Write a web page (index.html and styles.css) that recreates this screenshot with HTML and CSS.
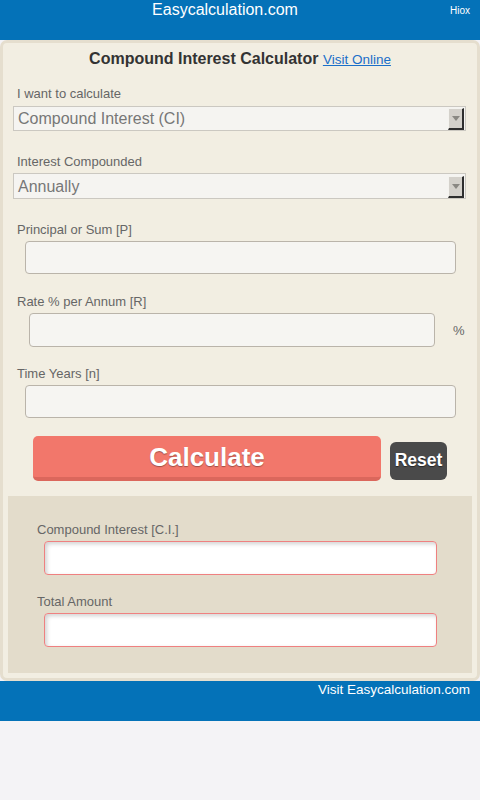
FILE: index.html
```html
<!DOCTYPE html>
<html>
<head>
<meta charset="utf-8">
<link rel="stylesheet" href="styles.css">
</head>
<body>
<header class="topbar">
  <div class="site">Easycalculation.com</div>
  <div class="hiox">Hiox</div>
</header>
<main class="panel">
  <h1 class="title">Compound Interest Calculator <a class="visit" href="#">Visit Online</a></h1>

  <div class="label first">I want to calculate</div>
  <div class="select">
    <span class="sel-text">Compound Interest (CI)</span>
    <span class="arrow"><svg width="8" height="5" viewBox="0 0 8 5"><path d="M0 0H8L4 5Z" fill="#8a8883"/></svg></span>
  </div>

  <div class="label">Interest Compounded</div>
  <div class="select sel2">
    <span class="sel-text">Annually</span>
    <span class="arrow"><svg width="8" height="5" viewBox="0 0 8 5"><path d="M0 0H8L4 5Z" fill="#8a8883"/></svg></span>
  </div>

  <div class="label">Principal or Sum [P]</div>
  <div class="input"></div>

  <div class="label l4">Rate % per Annum [R]</div>
  <div class="rate-row">
    <div class="input rate"></div>
    <span class="pct">%</span>
  </div>

  <div class="label l5">Time Years [n]</div>
  <div class="input"></div>

  <div class="buttons">
    <div class="calc">Calculate</div>
    <div class="reset">Reset</div>
  </div>

  <section class="result">
    <div class="rlabel">Compound Interest [C.I.]</div>
    <div class="output"></div>
    <div class="rlabel r2">Total Amount</div>
    <div class="output"></div>
  </section>
</main>
<footer class="bottombar">Visit Easycalculation.com</footer>
</body>
</html>
```

FILE: styles.css
```css
* { box-sizing: border-box; }
html, body { margin: 0; padding: 0; }
body {
  background: #f4f3f6;
  font-family: "Liberation Sans", Arial, sans-serif;
  width: 480px;
}
.topbar {
  background: #0472b8;
  height: 40px;
  display: grid;
  grid-template-columns: 1fr auto;
  padding-right: 10px;
  color: #fff;
}
.site {
  text-align: center;
  font-size: 16px;
  line-height: 18px;
  padding-top: 1px;
}
.hiox {
  font-size: 10px;
  line-height: 12px;
  padding-top: 5px;
}
.panel {
  background: #f2eee2;
  border: 3px solid #e5dece;
  border-radius: 7px;
  padding: 6px 0 5px;
  display: flex;
  flex-direction: column;
}
.title {
  margin: 0;
  text-align: center;
  font-size: 16px;
  line-height: 20px;
  font-weight: bold;
  color: #333;
}
.visit {
  font-size: 13.5px;
  font-weight: normal;
  color: #1a6fc9;
  text-decoration: underline;
}
.label {
  font-size: 13px;
  line-height: 16px;
  color: #666;
  padding-left: 14px;
  margin-top: 23px;
  margin-bottom: 3px;
}
.label.first { margin-top: 16px; margin-bottom: 4px; }
.label.l4 { margin-top: 20px; }
.label.l5 { margin-top: 19px; }
.select {
  margin: 0 11px 0 10px;
  height: 25px;
  border: 1px solid #cbc8c1;
  background: #f5f4f1;
  display: flex;
  align-items: center;
  padding: 1px 1px 0 4px;
}
.select.sel2 { height: 26px; }
.sel-text {
  flex: 1;
  font-size: 16px;
  color: #777;
}
.arrow {
  width: 16px;
  height: 22px;
  background: #d4d1cb;
  border-top: 1px solid #f4f3ef;
  border-left: 1px solid #f4f3ef;
  border-right: 2px solid #2e2e2e;
  border-bottom: 2px solid #2e2e2e;
  display: flex;
  align-items: center;
  justify-content: center;
}
.input {
  margin: 0 21px 0 22px;
  height: 33px;
  border: 1px solid #bab4aa;
  border-radius: 4px;
  background: #f6f5f2;
}
.rate-row {
  display: flex;
  align-items: center;
}
.input.rate {
  margin: 0;
  margin-left: 26px;
  width: 406px;
  height: 34px;
}
.pct {
  margin-left: 18px;
  margin-top: 0;
  font-size: 13px;
  color: #666;
}
.buttons {
  display: flex;
  align-items: flex-start;
  margin-top: 18px;
  padding-left: 30px;
}
.calc {
  width: 348px;
  height: 45px;
  background: #f2776b;
  border-bottom: 4px solid #db675c;
  border-radius: 5px;
  color: #fff;
  font-weight: bold;
  font-size: 26px;
  line-height: 42px;
  text-align: center;
  text-shadow: 0 1px 1px rgba(0,0,0,0.35);
}
.reset {
  margin-left: 9px;
  margin-top: 6px;
  width: 57px;
  height: 38px;
  background: #4a4a4a;
  border-radius: 6px;
  color: #fff;
  font-weight: bold;
  font-size: 17.5px;
  line-height: 36px;
  text-align: center;
  text-shadow: 0 1px 1px rgba(0,0,0,0.5);
}
.result {
  margin: 15px 5px 0;
  background: #e3dccb;
  height: 177px;
  padding-top: 26px;
}
.rlabel {
  font-size: 13px;
  line-height: 16px;
  color: #666;
  padding-left: 29px;
  margin-bottom: 3px;
}
.rlabel.r2 { margin-top: 19px; }
.output {
  margin-left: 36px;
  width: 393px;
  height: 34px;
  background: #fff;
  border: 1px solid #ef8080;
  border-radius: 4px;
  box-shadow: inset 2px 2px 4px rgba(0,0,0,0.18);
}
.bottombar {
  background: #0472b8;
  height: 40px;
  color: #fff;
  font-size: 13.5px;
  line-height: 16px;
  text-align: right;
  padding: 1px 10px 0 0;
}
```
